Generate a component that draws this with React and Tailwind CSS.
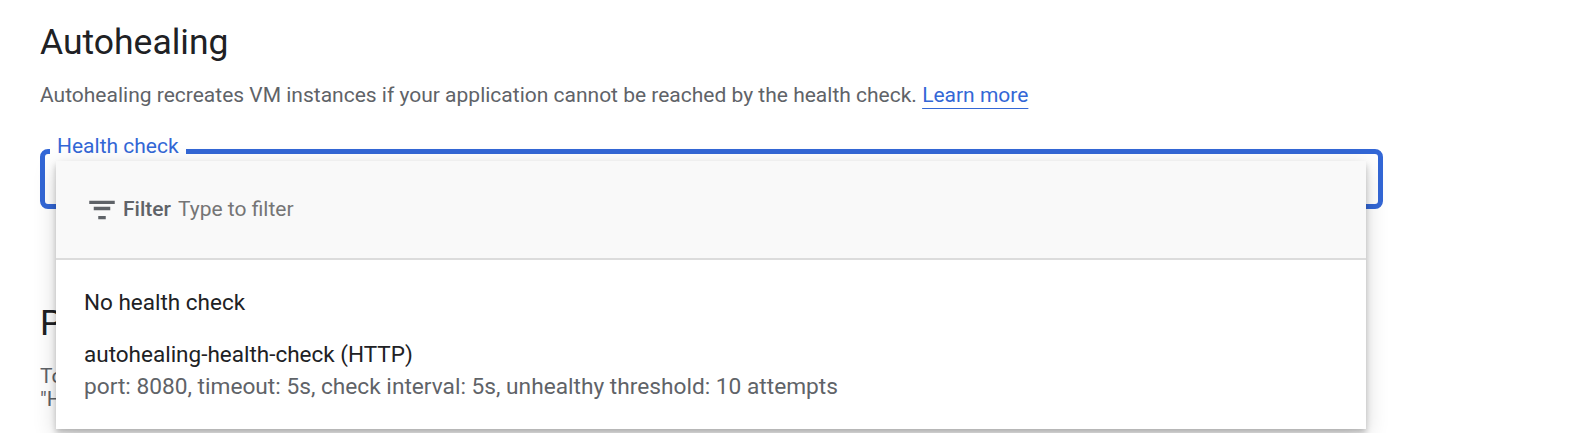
import { useState } from "react";

function FilterIcon() {
  return (
    <svg viewBox="0 0 24 24" className="w-[36px] h-[36px] shrink-0" fill="#5f6368">
      <path d="M9.5 18.2h5v-2.2h-5v2.2zM3.5 5.8v2.2h17V5.8h-17zm3 6.3h11v-2.2h-11v2.2z" />
    </svg>
  );
}

export default function App() {
  const [filter, setFilter] = useState("");

  const options = [
    { name: "No health check" },
    {
      name: "autohealing-health-check (HTTP)",
      detail:
        "port: 8080, timeout: 5s, check interval: 5s, unhealthy threshold: 10 attempts",
    },
  ];

  return (
    <div className="min-h-screen bg-white font-['Roboto','Liberation_Sans',sans-serif] px-10 pt-5">
      <h2 className="text-[35.5px] leading-[44px] text-[#202124]">Autohealing</h2>
      <p className="mt-4 text-[21px] leading-[30px] text-[#5f6368]">
        Autohealing recreates VM instances if your application cannot be reached by the health check.{" "}
        <a href="#" className="text-[#3367d6] underline decoration-1 underline-offset-[6px]">
          Learn more
        </a>
      </p>

      {/* health check field with open menu */}
      <div className="relative mt-[39px] w-[1343px] h-[60px] border-[5px] border-[#3367d6] rounded-[8px]">
        <span className="absolute left-[5px] -top-[20px] bg-white px-[7px] text-[21px] leading-[24px] text-[#3367d6]">
          Health check
        </span>

        <div className="absolute left-[11px] top-[7px] w-[1310px] h-[268px] bg-white z-10 shadow-[0_4px_6px_rgba(0,0,0,0.22),0_6px_22px_rgba(0,0,0,0.16)]">
          <div className="h-[99px] bg-[#f9f9f9] border-b-2 border-[#dcdcdc] flex items-center pl-7">
            <FilterIcon />
            <span className="ml-[3px] text-[21px] font-medium text-[#5f6368]">Filter</span>
            <input
              value={filter}
              onChange={(e) => setFilter(e.target.value)}
              placeholder="Type to filter"
              className="ml-[7px] flex-1 bg-transparent outline-none text-[21px] text-[#3c4043] placeholder:text-[#757575]"
            />
          </div>
          <div className="pt-[18px]">
            {options.map((o) => (
              <div key={o.name} className={o.detail ? "pl-7 pt-[12px]" : "pl-7 h-[48px] flex items-center"}>
                <div className="text-[22.5px] leading-[32px] text-[#202124]">{o.name}</div>
                {o.detail && (
                  <div className="text-[22.7px] leading-[34px] text-[#5f6368]">{o.detail}</div>
                )}
              </div>
            ))}
          </div>
        </div>
      </div>

      <h2 className="mt-[92px] text-[35.5px] leading-[44px] text-[#202124]">Port mapping</h2>
      <p className="mt-[20px] text-[21px] leading-[23px] text-[#5f6368]">
        To send traffic to this group, map a port name to a port number.
        <br />
        "HTTP" is used by default when no mapping is defined.
      </p>
    </div>
  );
}
